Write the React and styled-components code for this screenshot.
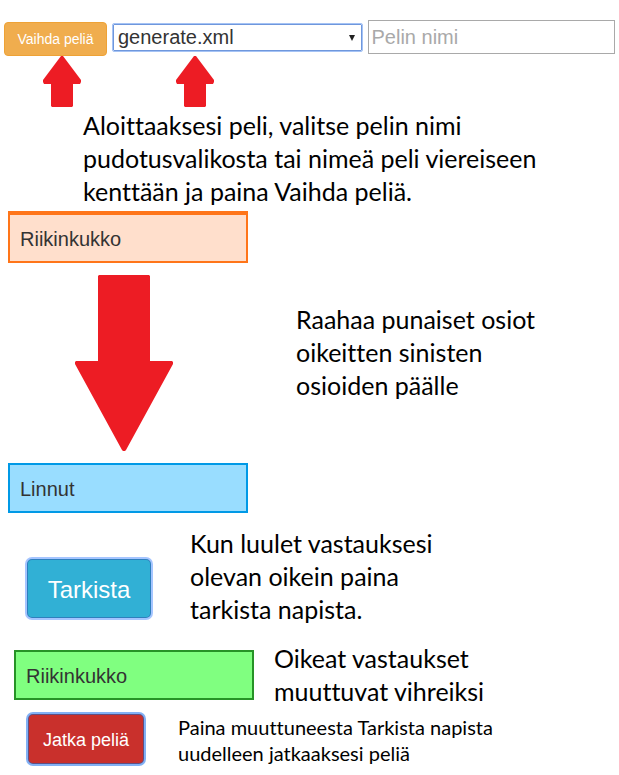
import React from 'react';
import styled, { createGlobalStyle } from 'styled-components';

const GlobalStyle = createGlobalStyle`
  *, *::before, *::after { box-sizing: border-box; }
  body {
    margin: 0;
    background: #fff;
    color: #333;
    font-family: "Liberation Sans", Arial, sans-serif;
  }
`;

const Page = styled.main`
  display: flex;
  flex-direction: column;
  padding: 20px 4px 8px;
`;

const Toolbar = styled.form`
  display: grid;
  grid-template-columns: 103px 252fr 247fr;
  align-items: start;
  gap: 5px;
`;

const ChangeButton = styled.button`
  height: 34px;
  margin-top: 2px;
  padding: 0;
  border: 1px solid #eea236;
  border-radius: 4px;
  background: #f0ad4e;
  color: #fff;
  font: 14px "Liberation Sans", Arial, sans-serif;
  white-space: nowrap;
`;

const SelectBox = styled.div`
  display: grid;
  align-items: center;
  min-width: 0;
  height: 29px;
  margin-top: 3px;
  padding: 0 1px;
  & > * { grid-area: 1 / 1; }
  & > svg { justify-self: end; margin-right: 7px; pointer-events: none; }
`;

const GameSelect = styled.select`
  appearance: none;
  width: 100%;
  height: 27px;
  padding: 0 20px 2px 4px;
  border: 1px solid #6f97dc;
  border-radius: 1px;
  outline: 1px solid #a5c3f5;
  outline-offset: 0;
  background: #fff;
  color: #333;
  font: 20px "Liberation Sans", Arial, sans-serif;
`;

const NameInput = styled.input`
  width: 100%;
  min-width: 0;
  height: 34px;
  padding: 0 2px;
  border: 1px solid #a9a9a9;
  background: #fff;
  font: 20px "Liberation Sans", Arial, sans-serif;
  &::placeholder { color: #a9a9a9; opacity: 1; }
`;

const Pointers = styled.div`
  display: flex;
  gap: 95px;
  height: 53px;
  padding: 0 39px;
`;

const Text = styled.p`
  margin: 0;
  color: #000;
  font-family: Lato, Calibri, sans-serif;
  font-size: ${({ $small }) => ($small ? '20px' : '25px')};
  line-height: ${({ $small }) => ($small ? '26px' : '33px')};
  font-variant-ligatures: none;
`;

const Intro = styled.div`
  padding-left: 79px;
`;

const tones = {
  orange: ['#ffdfcc', '#ff7519'],
  blue: ['#99ddff', '#0099e6'],
  green: ['#80ff80', '#269326'],
};

const Card = styled.div`
  display: flex;
  flex: none;
  align-items: center;
  width: 240px;
  height: ${({ $tone }) => ($tone === 'orange' ? '52px' : '50px')};
  padding: 2px 10px 0;
  border: 2px solid ${({ $tone }) => tones[$tone][1]};
  border-top-width: ${({ $tone }) => ($tone === 'orange' ? '4px' : '2px')};
  background: ${({ $tone }) => tones[$tone][0]};
  font-size: 20px;
`;

const DragStep = styled.section`
  display: flex;
  gap: 48px;
  padding: 3px 4px 0;
`;

const DragColumn = styled.div`
  display: flex;
  flex-direction: column;
  gap: 12px;
  & > svg { margin-left: 67px; }
`;

const DragText = styled.div`
  padding-top: 92px;
`;

const Step = styled.section`
  display: flex;
  align-items: ${({ $align }) => $align};
  gap: ${({ $gap }) => $gap};
  padding-left: ${({ $indent }) => $indent};
  margin-top: ${({ $top }) => $top};
`;

const ActionButton = styled.button`
  flex: none;
  border: 2px solid ${({ $danger }) => ($danger ? '#605083' : '#2f7fbd')};
  border-radius: 6px;
  outline: 2px solid ${({ $danger }) => ($danger ? '#82b1f5' : '#a5c5ff')};
  outline-offset: -1px;
  margin: ${({ $danger }) => ($danger ? '1px' : '1px 1px 7px')};
  width: ${({ $danger }) => ($danger ? '118px' : '126px')};
  height: ${({ $danger }) => ($danger ? '52px' : '61px')};
  padding: 2px 0 0;
  background: ${({ $danger }) => ($danger ? '#c9302c' : '#31b0d5')};
  color: #fff;
  font: ${({ $danger }) => ($danger ? '18px' : '24px')} "Liberation Sans", Arial, sans-serif;
  white-space: nowrap;
`;

function UpArrow() {
  return (
    <svg width="38" height="52" viewBox="0 0 38 52" fill="#ed1c24" aria-hidden="true">
      <path d="M18 0h2l18 24v2l-1 2h-7v22l-1 1H9l-1-1V28H1l-1-2v-2z" />
    </svg>
  );
}

function DownArrow() {
  return (
    <svg width="98" height="176" viewBox="0 0 98 176" fill="#ed1c24" aria-hidden="true">
      <path d="M24 0h50l1 1v85h22l1 1v2L51 175l-1 1h-2l-1-1L0 89v-2l1-1h22V1z" />
    </svg>
  );
}

export default function App() {
  return (
    <>
      <GlobalStyle />
      <Page>
        <Toolbar onSubmit={(event) => event.preventDefault()}>
          <ChangeButton type="submit">Vaihda peliä</ChangeButton>
          <SelectBox>
            <GameSelect aria-label="Peli" defaultValue="generate.xml">
              <option>generate.xml</option>
            </GameSelect>
            <svg width="6" height="6" viewBox="0 0 6 6" fill="#222" aria-hidden="true">
              <path d="M0 0h6L3 6z" />
            </svg>
          </SelectBox>
          <NameInput type="text" aria-label="Pelin nimi" placeholder="Pelin nimi" />
        </Toolbar>
        <Pointers>
          <UpArrow />
          <UpArrow />
        </Pointers>
        <Intro>
          <Text>
            Aloittaaksesi peli, valitse pelin nimi<br />
            pudotusvalikosta tai nimeä peli viereiseen<br />
            kenttään ja paina Vaihda peliä.
          </Text>
        </Intro>
        <DragStep>
          <DragColumn>
            <Card $tone="orange">Riikinkukko</Card>
            <DownArrow />
            <Card $tone="blue">Linnut</Card>
          </DragColumn>
          <DragText>
            <Text>
              Raahaa punaiset osiot<br />
              oikeitten sinisten<br />
              osioiden päälle
            </Text>
          </DragText>
        </DragStep>
        <Step $align="flex-end" $gap="37px" $indent="21px" $top="14px">
          <ActionButton type="button">Tarkista</ActionButton>
          <Text>
            Kun luulet vastauksesi<br />
            olevan oikein paina<br />
            tarkista napista.
          </Text>
        </Step>
        <Step $align="center" $gap="20px" $indent="10px" $top="16px">
          <Card $tone="green">Riikinkukko</Card>
          <Text>
            Oikeat vastaukset<br />
            muuttuvat vihreiksi
          </Text>
        </Step>
        <Step $align="flex-end" $gap="32px" $indent="22px" $top="4px">
          <ActionButton type="button" $danger>Jatka peliä</ActionButton>
          <Text $small>
            Paina muuttuneesta Tarkista napista<br />
            uudelleen jatkaaksesi peliä
          </Text>
        </Step>
      </Page>
    </>
  );
}
